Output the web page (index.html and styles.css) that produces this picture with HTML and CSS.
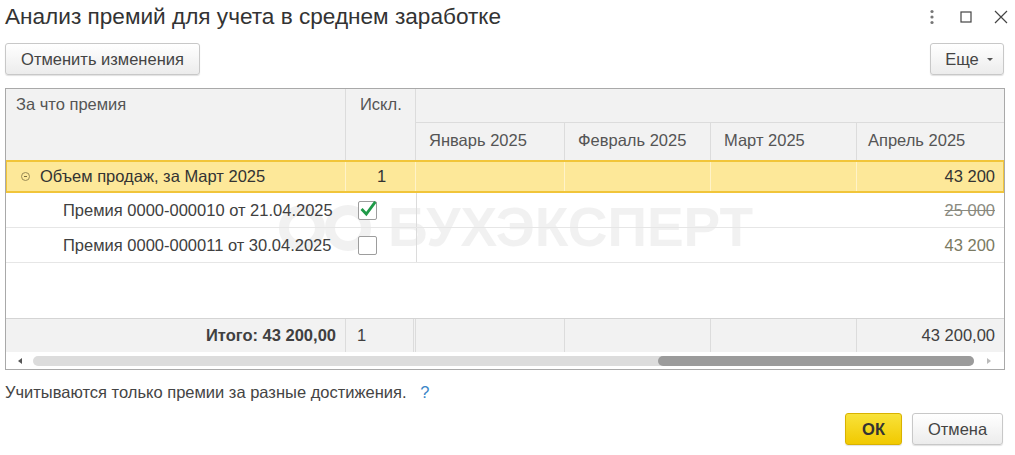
FILE: index.html
```html
<!DOCTYPE html>
<html lang="ru">
<head>
<meta charset="utf-8">
<title>Анализ премий</title>
<link rel="stylesheet" href="styles.css">
</head>
<body>
<div class="window">
  <div class="titlebar">
    <h1 class="title">Анализ премий для учета в среднем заработке</h1>
    <div class="wincontrols">
      <svg class="ico" width="14" height="16" viewBox="0 0 14 16"><circle cx="7" cy="2.5" r="1.6" fill="#777"/><circle cx="7" cy="8" r="1.6" fill="#777"/><circle cx="7" cy="13.5" r="1.6" fill="#777"/></svg>
      <svg class="ico" width="14" height="14" viewBox="0 0 14 14"><rect x="2" y="2" width="10" height="10" fill="none" stroke="#444" stroke-width="1.2"/></svg>
      <svg class="ico" width="16" height="16" viewBox="0 0 16 16"><path d="M2 2 L14 14 M14 2 L2 14" stroke="#444" stroke-width="1.2" fill="none"/></svg>
    </div>
  </div>

  <div class="toolbar">
    <button class="btn">Отменить изменения</button>
    <button class="btn btn-more">Еще <span class="caret"></span></button>
  </div>

  <div class="table">
    <div class="watermark">
      <svg class="wm-logo" width="100" height="48" viewBox="0 0 100 48"><circle cx="26" cy="24" r="18" fill="none" stroke="#000" stroke-width="10"/><circle cx="72" cy="24" r="18" fill="none" stroke="#000" stroke-width="10"/></svg>
      <span class="wm-text">БУХЭКСПЕРТ</span>
    </div>

    <div class="thead">
      <div class="th c1">За что премия</div>
      <div class="th c2">Искл.</div>
      <div class="th band"></div>
      <div class="th sub">Январь 2025</div>
      <div class="th sub">Февраль 2025</div>
      <div class="th sub">Март 2025</div>
      <div class="th sub last">Апрель 2025</div>
    </div>

    <div class="row group">
      <div class="td c1"><span class="collapse"></span>Объем продаж, за Март 2025</div>
      <div class="td c2 center">1</div>
      <div class="td m"></div>
      <div class="td m"></div>
      <div class="td m"></div>
      <div class="td m right">43 200</div>
    </div>

    <div class="row item">
      <div class="td c1 indent">Премия 0000-000010 от 21.04.2025</div>
      <div class="td c2"><span class="cb checked"><svg width="18" height="18" viewBox="0 0 18 18"><path d="M3.5 9 L7.3 13 L15.5 2" stroke="#1f9a48" stroke-width="2.8" fill="none" stroke-linecap="square"/></svg></span></div>
      <div class="td m first"></div>
      <div class="td m"></div>
      <div class="td m"></div>
      <div class="td m right strike">25 000</div>
    </div>

    <div class="row item">
      <div class="td c1 indent">Премия 0000-000011 от 30.04.2025</div>
      <div class="td c2"><span class="cb"></span></div>
      <div class="td m first"></div>
      <div class="td m"></div>
      <div class="td m"></div>
      <div class="td m right olive">43 200</div>
    </div>

    <div class="spacer-area"></div>

    <div class="row foot">
      <div class="td c1 right bold">Итого: 43 200,00</div>
      <div class="td c2">1</div>
      <div class="td m first"></div>
      <div class="td m"></div>
      <div class="td m"></div>
      <div class="td m right">43 200,00</div>
    </div>

    <div class="scrollbar">
      <span class="arrow left"></span>
      <div class="track"><div class="thumb"></div></div>
      <span class="arrow rightarr"></span>
    </div>
  </div>

  <div class="note">Учитываются только премии за разные достижения. <span class="help">?</span></div>

  <div class="actions">
    <button class="btn btn-ok">ОК</button>
    <button class="btn btn-cancel">Отмена</button>
  </div>
</div>
</body>
</html>
```

FILE: styles.css
```css
* { box-sizing: border-box; }
html, body { margin: 0; padding: 0; background: #fff; }
body {
  font-family: "Liberation Sans", Arial, sans-serif;
  color: #404040;
  font-size: 16.5px;
}
.window { width: 1015px; height: 455px; overflow: hidden; }

.titlebar {
  height: 34px;
  display: flex;
  align-items: center;
  justify-content: space-between;
  padding: 0 6px 0 5px;
}
.title {
  margin: 0;
  font-weight: normal;
  font-size: 22.6px;
  color: #333;
}
.wincontrols { display: flex; align-items: center; gap: 20px; }
.ico { display: block; }

.toolbar {
  margin-top: 9px;
  height: 32px;
  display: flex;
  justify-content: space-between;
  padding: 0 11px 0 5px;
}
.btn {
  font-family: inherit;
  font-size: 16.5px;
  color: #444;
  height: 32px;
  border: 1px solid #c8c8c8;
  border-radius: 3px;
  background: linear-gradient(#ffffff, #ececec);
  box-shadow: 0 1px 1px rgba(0,0,0,0.12);
  padding: 0;
  cursor: default;
}
.toolbar .btn:first-child { width: 195px; }
.btn-more { width: 74px; padding: 0 0 0 4px; display: flex; align-items: center; justify-content: center; gap: 8px; }
.caret {
  width: 0; height: 0;
  border-left: 3px solid transparent;
  border-right: 3px solid transparent;
  border-top: 3px solid #555;
  margin-top: 1px;
}

.table {
  position: relative;
  margin: 13px 0 0 5px;
  width: 1000px;
  height: 282px;
  border: 1px solid #a9a9a9;
  display: flex;
  flex-direction: column;
  overflow: hidden;
}
.thead, .row {
  position: relative;
  z-index: 1;
  display: grid;
  grid-template-columns: 340px 70px 149px 146px 146px 147px;
}
.thead {
  grid-template-rows: 34px 37px;
  background: #f2f2f2;
  color: #555;
}
.th { padding: 0 10px; }
.th.c1 { grid-row: 1 / 3; grid-column: 1; padding-top: 6px; border-right: 1px solid #dcdcdc; }
.th.c2 { grid-row: 1 / 3; grid-column: 2; padding: 6px 0 0 14px; border-right: 1px solid #dcdcdc; }
.th.band { grid-row: 1; grid-column: 3 / 7; border-bottom: 1px solid #dcdcdc; }
.th.sub { grid-row: 2; display: flex; align-items: center; padding-left: 13px; border-right: 1px solid #dcdcdc; padding-bottom: 2px; }
.th.sub.last { border-right: none; padding-left: 11px; }

.td { display: flex; align-items: center; padding: 0 10px; white-space: nowrap; }
.right { justify-content: flex-end; }
.center { justify-content: center; }
.bold { font-weight: bold; }

.row.group {
  height: 33px;
  background: #fde899;
  border: 2px solid #f1c53a;
  margin-left: -1px;
  width: 1000px;
  grid-template-columns: 339px 70px 149px 146px 146px 146px;
  color: #333;
}
.row.group .td { border-right: 1px solid #fff3c8; }
.row.group .td:last-child { border-right: none; padding-right: 8px; }
.row.group .c1 { padding-left: 14px; }
.row.group .c2 { padding-left: 12px; }
.collapse {
  width: 9px; height: 9px;
  border: 1px solid #9a8a55;
  border-radius: 50%;
  margin-right: 10px;
  position: relative;
  flex: none;
}
.collapse::after {
  content: "";
  position: absolute;
  left: 2px; right: 2px; top: 3px;
  height: 1px;
  background: #7a6d40;
}

.row.item {
  height: 35px;
  border-bottom: 1px solid #e6e6e6;
  color: #404040;
}
.row.item .indent { padding-left: 57px; }
.row.item .c2 { padding-left: 12px; }
.row .first { border-left: 1px solid #dcdcdc; }
.row.item .td:last-child { padding-right: 9px; }
.strike { color: #8a8a80; text-decoration: line-through; }
.olive { color: #7a7a62; }

.cb {
  width: 19px; height: 19px;
  border: 1px solid #9d9d9d;
  border-radius: 2px;
  background: #fff;
  display: flex;
  align-items: center;
  justify-content: center;
}
.cb svg { display: block; overflow: visible; }

.spacer-area { flex: 1; }

.row.foot {
  height: 34px;
  background: #f2f2f2;
  border-top: 1px solid #d4d4d4;
  color: #404040;
}
.row.foot .td { border-right: 1px solid #dcdcdc; }
.row.foot .td:last-child { border-right: none; padding-right: 9px; }
.row.foot .c1 { padding-right: 9px; }
.row.foot .c2 { padding-left: 11px; border-right: 3px double #dcdcdc; }
.row.foot .first { border-left: none; }

.scrollbar {
  position: relative;
  z-index: 1;
  height: 17px;
  display: flex;
  align-items: center;
  background: #fff;
}
.arrow { width: 27px; display: flex; justify-content: center; }
.arrow.left::before {
  content: "";
  border-top: 3px solid transparent;
  border-bottom: 3px solid transparent;
  border-right: 4px solid #555;
}
.arrow.rightarr::before {
  content: "";
  border-top: 3px solid transparent;
  border-bottom: 3px solid transparent;
  border-left: 4px solid #bbb;
}
.arrow.rightarr { width: 30px; }
.track {
  flex: 1;
  height: 10px;
  background: #dcdcdc;
  border-radius: 5px;
  display: flex;
  justify-content: flex-end;
}
.thumb {
  width: 316px;
  height: 10px;
  background: #9b9b9b;
  border-radius: 5px;
}

.watermark {
  position: absolute;
  z-index: 0;
  left: 270px;
  top: 111px;
  display: flex;
  align-items: center;
  gap: 12px;
  pointer-events: none;
  opacity: 0.05;
}
.wm-text {
  font-family: "Liberation Sans", Arial, sans-serif;
  font-weight: bold;
  font-size: 55px;
  color: #000;
  line-height: 1;
}

.note {
  margin: 12px 0 0 5px;
  height: 20px;
  line-height: 20px;
  color: #444;
}
.help { color: #3a86c8; margin-left: 9px; }

.actions {
  margin-top: 11px;
  display: flex;
  justify-content: flex-end;
  gap: 10px;
  padding-right: 12px;
}
.btn-ok {
  width: 57px;
  font-weight: bold;
  color: #333;
  background: linear-gradient(#f8e23a, #f1c900);
  border-color: #d9b200;
}
.btn-cancel { width: 91px; }
```
